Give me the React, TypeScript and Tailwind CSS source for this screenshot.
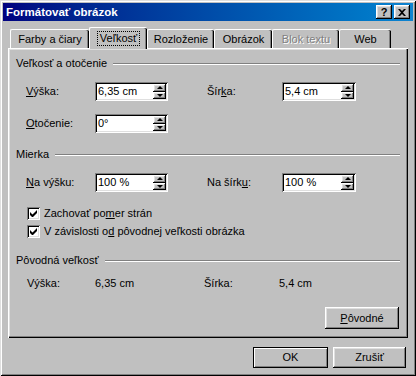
import React from 'react';

const raised = 'shadow-[inset_-1px_-1px_#000,inset_1px_1px_#fff,inset_-2px_-2px_#808080,inset_2px_2px_#dfdfdf]';
const sunken = 'shadow-[inset_1px_1px_#808080,inset_-1px_-1px_#fff,inset_2px_2px_#000,inset_-2px_-2px_#dfdfdf]';

function GroupHeader({ label }: { label: string }) {
  return (
    <div className="flex h-[13px] items-center gap-[6px]">
      <span className="whitespace-nowrap">{label}</span>
      <div className="h-[2px] flex-1 border-t border-b border-t-[#808080] border-b-white" />
    </div>
  );
}

function Spin({ value, className }: { value: string; className: string }) {
  return (
    <div className={`flex h-[19px] bg-white p-[2px] ${sunken} ${className}`}>
      <span className="flex-1 pl-[1px] leading-[15px]">{value}</span>
      <div className="flex w-[13px] flex-col">
        <div className={`flex flex-1 items-center justify-center bg-[#c0c0c0] ${raised}`}>
          <div className="h-0 w-0 border-r-[3px] border-b-[3px] border-l-[3px] border-r-transparent border-b-black border-l-transparent" />
        </div>
        <div className={`flex flex-1 items-center justify-center bg-[#c0c0c0] ${raised}`}>
          <div className="h-0 w-0 border-t-[3px] border-r-[3px] border-l-[3px] border-t-black border-r-transparent border-l-transparent" />
        </div>
      </div>
    </div>
  );
}

function Check({ children }: { children: React.ReactNode }) {
  return (
    <div className="flex h-[13px] items-center gap-[4px] pl-[11px]">
      <div className={`flex h-[13px] w-[13px] items-center justify-center bg-white ${sunken}`}>
        <svg width="7" height="7" viewBox="0 0 7 7">
          <path d="M0 2v3l2 2h1l4-4V0L2.5 4.5z" fill="#000" />
        </svg>
      </div>
      <span>{children}</span>
    </div>
  );
}

function Tab({ label, width, active, disabled }: { label: string; width: string; active?: boolean; disabled?: boolean }) {
  if (active) {
    return (
      <div className={`relative z-10 -mb-[1px] flex h-[22px] items-start justify-center rounded-t-[2px] border-t border-l border-white bg-[#c0c0c0] pt-[3px] shadow-[inset_-1px_0_#000,inset_-2px_0_#808080] ${width}`}>
        <span className="border border-dotted border-black px-[2px] leading-[13px]">{label}</span>
      </div>
    );
  }
  return (
    <div className={`flex h-[19px] items-center justify-center rounded-t-[2px] border-t border-l border-white shadow-[inset_-1px_0_#000,inset_-2px_0_#808080] ${width}`}>
      <span className={disabled ? 'text-[#808080] [text-shadow:1px_1px_#fff]' : ''}>{label}</span>
    </div>
  );
}

export default function App() {
  return (
    <div className="flex h-[376px] w-[416px] flex-col bg-[#c0c0c0] p-[3px] font-['Liberation_Sans',Arial,sans-serif] text-[11px] leading-[13px] text-black shadow-[inset_1px_1px_#dfdfdf,inset_-1px_-1px_#000,inset_2px_2px_#fff,inset_-2px_-2px_#808080]">
      {/* title bar */}
      <div className="flex h-[18px] items-center justify-between bg-linear-to-r from-[#000080] to-[#1084d0] pr-[3px] pl-[3px]">
        <span className="text-[11.5px] font-bold text-white">Formátovať obrázok</span>
        <div className="flex gap-[2px]">
          <div className={`flex h-[14px] w-[16px] items-center justify-center bg-[#c0c0c0] text-[11px] leading-none font-bold ${raised}`}>?</div>
          <div className={`flex h-[14px] w-[16px] items-center justify-center bg-[#c0c0c0] ${raised}`}>
            <svg width="8" height="7" viewBox="0 0 8 7">
              <path d="M0 0h2l2 2 2-2h2L5 3.5 8 7H6L4 5 2 7H0l3-3.5z" fill="#000" />
            </svg>
          </div>
        </div>
      </div>

      <div className="flex flex-1 flex-col px-[5px] pt-[6px]">
        {/* tabs */}
        <div className="flex h-[21px] items-end pl-[2px]">
          <Tab label="Farby a čiary" width="w-[79px]" />
          <Tab label="Veľkosť" width="w-[58px]" active />
          <Tab label="Rozloženie" width="w-[67px]" />
          <Tab label="Obrázok" width="w-[58px]" />
          <Tab label="Blok textu" width="w-[67px]" disabled />
          <Tab label="Web" width="w-[52px]" />
        </div>

        {/* panel */}
        <div className="flex h-[290px] flex-col px-[8px] pt-[9px] shadow-[inset_1px_1px_#fff,inset_-1px_-1px_#000,inset_-2px_-2px_#808080,inset_2px_2px_#dfdfdf]">
          <GroupHeader label="Veľkosť a otočenie" />
          <div className="mt-[12px] flex h-[19px] items-center pl-[10px]">
            <span className="w-[69px]"><u>V</u>ýška:</span>
            <Spin value="6,35 cm" className="w-[73px]" />
            <div className="w-[39px]" />
            <span className="w-[75px]">Šír<u>k</u>a:</span>
            <Spin value="5,4 cm" className="w-[74px]" />
          </div>
          <div className="mt-[13px] flex h-[19px] items-center pl-[10px]">
            <span className="w-[69px]"><u>O</u>točenie:</span>
            <Spin value="0°" className="w-[73px]" />
          </div>

          <div className="mt-[15px]">
            <GroupHeader label="Mierka" />
          </div>
          <div className="mt-[12px] flex h-[19px] items-center pl-[10px]">
            <span className="w-[69px]"><u>N</u>a výšku:</span>
            <Spin value="100 %" className="w-[73px]" />
            <div className="w-[39px]" />
            <span className="w-[75px]">Na šírk<u>u</u>:</span>
            <Spin value="100 %" className="w-[74px]" />
          </div>
          <div className="mt-[15px] flex flex-col gap-[5px]">
            <Check>Zachovať po<u>m</u>er strán</Check>
            <Check>V závislosti o<u>d</u> pôvodnej veľkosti obrázka</Check>
          </div>

          <div className="mt-[16px]">
            <GroupHeader label="Pôvodná veľkosť" />
          </div>
          <div className="mt-[10px] flex h-[13px] items-center pl-[11px]">
            <span className="w-[68px]">Výška:</span>
            <span className="w-[109px]">6,35 cm</span>
            <span className="w-[75px]">Šírka:</span>
            <span>5,4 cm</span>
          </div>
          <div className="mt-[17px] flex justify-end pr-[1px]">
            <div className={`flex h-[22px] w-[74px] items-center justify-center ${raised}`}>
              <span><u>P</u>ôvodné</span>
            </div>
          </div>
        </div>

        {/* dialog buttons */}
        <div className="mt-[9px] flex justify-end gap-[5px] pr-[2px]">
          <div className="flex h-[21px] w-[75px] items-center justify-center border border-black shadow-[inset_1px_1px_#fff,inset_-1px_-1px_#808080]">
            OK
          </div>
          <div className={`flex h-[21px] w-[73px] items-center justify-center ${raised}`}>Zrušiť</div>
        </div>
      </div>
    </div>
  );
}
